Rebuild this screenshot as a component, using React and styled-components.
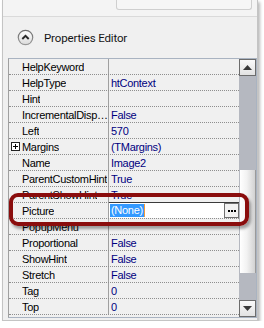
import React from "react";
import styled, { createGlobalStyle } from "styled-components";

const Global = createGlobalStyle`
  html, body { margin: 0; padding: 0; background: #ffffff; }
  body { font-family: "Liberation Sans", Arial, sans-serif; }
`;

const Panel = styled.div`
  position: relative;
  box-sizing: border-box;
  margin-left: 2px;
  width: 256px;
  height: 321px;
  background: #f0f0f0;
  border: 1px solid #c4c4c4;
  border-top: none;
  box-shadow: 2px 2px 3px rgba(0, 0, 0, 0.28);
  display: flex;
  flex-direction: column;
`;

const TopStrip = styled.div`
  height: 17px;
  box-sizing: border-box;
  background: #f4f4f4;
  border-bottom: 1px solid #dadada;
  display: flex;
  justify-content: flex-end;
  padding-right: 5px;
`;

const SearchStub = styled.div`
  width: 136px;
  height: 10px;
  box-sizing: border-box;
  border: 1px solid #cfcfcf;
  border-top: none;
  border-radius: 0 0 3px 3px;
  background: #f6f6f6;
`;

const Header = styled.div`
  height: 41px;
  display: flex;
  align-items: center;
  padding-left: 14px;
  gap: 10px;
  font-family: Roboto, "Noto Sans", sans-serif;
  font-size: 11.5px;
  letter-spacing: -0.15px;
  color: #141414;
`;

const Grid = styled.div`
  margin-left: 5px;
  box-sizing: border-box;
  height: 260px;
  border: 1px solid #a9b3c1;
  border-left-color: #a0a0a0;
  display: flex;
  font-family: "Liberation Sans", Arial, sans-serif;
  font-size: 11px;
  letter-spacing: -0.3px;
`;

const Rows = styled.div`
  flex: 1;
  display: flex;
  flex-direction: column;
  min-width: 0;
`;

const Row = styled.div`
  height: 16px;
  box-sizing: border-box;
  display: grid;
  grid-template-columns: 100px 1fr;
  border-bottom: 1px dotted #8e8e8e;
`;

const NameCell = styled.div`
  box-sizing: border-box;
  display: flex;
  align-items: center;
  padding-left: 2px;
  border-right: 1px solid #a0a0a0;
  color: #000;
  overflow: hidden;
  white-space: nowrap;
`;

const ExpSlot = styled.span`
  width: 11px;
  flex: none;
  display: flex;
  align-items: center;
`;

const PlusBox = styled.span`
  width: 9px;
  height: 9px;
  box-sizing: border-box;
  border: 1px solid #222;
  background: #fff;
  position: relative;
  &::before, &::after {
    content: "";
    position: absolute;
    background: #000;
  }
  &::before { left: 1px; right: 1px; top: 3px; height: 1px; }
  &::after { top: 1px; bottom: 1px; left: 3px; width: 1px; }
`;

const NameText = styled.span`
  overflow: hidden;
  text-overflow: ellipsis;
  white-space: nowrap;
  min-width: 0;
`;

const ValueCell = styled.div`
  display: flex;
  align-items: center;
  padding-left: 2px;
  color: #00007f;
  white-space: nowrap;
  overflow: hidden;
`;

const EditCell = styled.div`
  display: flex;
  align-items: stretch;
  background: #ffffff;
  border-top: 1px solid #3a3a3a;
  margin-top: -1px;
  padding-left: 1px;
`;

const Selected = styled.span`
  align-self: center;
  background: #3399ff;
  color: #fff;
  padding: 0 1px;
  line-height: 13px;
  border-right: 1px solid #f39a3c;
`;

const Spacer = styled.span`
  flex: 1;
`;

const EllipsisBtn = styled.span`
  width: 15px;
  box-sizing: border-box;
  border: 1px solid #6f6f6f;
  background: #f2f2f2;
  display: flex;
  align-items: center;
  justify-content: center;
  gap: 1px;
`;

const Dot = styled.span`
  width: 2px;
  height: 2px;
  background: #000;
`;

const Scrollbar = styled.div`
  width: 17px;
  flex: none;
  background: #b5b8c0;
  display: flex;
  flex-direction: column;
`;

const ScrollBtn = styled.div`
  height: 17px;
  box-sizing: border-box;
  border: 1px solid #6c6c6c;
  background: linear-gradient(#fafafa, #e2e2e2);
  display: flex;
  align-items: center;
  justify-content: center;
`;

const Track = styled.div`
  flex: 1;
  display: flex;
  flex-direction: column;
`;

const Thumb = styled.div`
  box-sizing: border-box;
  margin-left: 1px;
  border-right: 1px solid #9a9a9a;
  background: linear-gradient(90deg, #ffffff 0%, #f2f2f2 45%, #d2d2d2 100%);
`;

const Callout = styled.div`
  position: absolute;
  left: 6px;
  top: 193px;
  width: 240px;
  height: 33px;
  box-sizing: border-box;
  border: 4px solid #8a0d0d;
  border-radius: 9px;
  box-shadow: 2px 3px 3px rgba(0, 0, 0, 0.35);
  pointer-events: none;
`;

const CollapseIcon = () => (
  <svg width="17" height="17" viewBox="0 0 17 17">
    <defs>
      <linearGradient id="ring" x1="0" y1="0" x2="0" y2="1">
        <stop offset="0" stopColor="#6a6a6a" />
        <stop offset="1" stopColor="#9a9a9a" />
      </linearGradient>
      <linearGradient id="face" x1="0" y1="0" x2="0" y2="1">
        <stop offset="0" stopColor="#ffffff" />
        <stop offset="1" stopColor="#dcdcdc" />
      </linearGradient>
    </defs>
    <circle cx="8.5" cy="8.5" r="7.8" fill="url(#ring)" />
    <circle cx="8.5" cy="8.5" r="6.6" fill="url(#face)" />
    <path d="M5.3 10 L8.5 6.8 L11.7 10" fill="none" stroke="#2a2a2a" strokeWidth="1.9" />
  </svg>
);

const Tri = ({ up }) => (
  <svg width="9" height="5" viewBox="0 0 9 5">
    <path d={up ? "M0 5 L4.5 0 L9 5 Z" : "M0 0 L9 0 L4.5 5 Z"} fill="#3a3a3a" />
  </svg>
);

const props = [
  { name: "HelpKeyword", value: "" },
  { name: "HelpType", value: "htContext" },
  { name: "Hint", value: "" },
  { name: "IncrementalDisplay", value: "False" },
  { name: "Left", value: "570" },
  { name: "Margins", value: "(TMargins)", expandable: true },
  { name: "Name", value: "Image2" },
  { name: "ParentCustomHint", value: "True" },
  { name: "ParentShowHint", value: "True" },
  { name: "Picture", value: "(None)", editing: true },
  { name: "PopupMenu", value: "" },
  { name: "Proportional", value: "False" },
  { name: "ShowHint", value: "False" },
  { name: "Stretch", value: "False" },
  { name: "Tag", value: "0" },
  { name: "Top", value: "0" },
];

export default function App() {
  const thumbTop = 94;
  const thumbHeight = 103;
  return (
    <>
      <Global />
      <Panel>
        <TopStrip>
          <SearchStub />
        </TopStrip>
        <Header>
          <CollapseIcon />
          <span>Properties Editor</span>
        </Header>
        <Grid>
          <Rows>
            {props.map((p) => (
              <Row key={p.name}>
                <NameCell>
                  <ExpSlot>{p.expandable && <PlusBox />}</ExpSlot>
                  <NameText>{p.name}</NameText>
                </NameCell>
                {p.editing ? (
                  <EditCell>
                    <Selected>{p.value}</Selected>
                    <Spacer />
                    <EllipsisBtn>
                      <Dot />
                      <Dot />
                      <Dot />
                    </EllipsisBtn>
                  </EditCell>
                ) : (
                  <ValueCell>{p.value}</ValueCell>
                )}
              </Row>
            ))}
          </Rows>
          <Scrollbar>
            <ScrollBtn>
              <Tri up />
            </ScrollBtn>
            <Track>
              <Thumb style={{ marginTop: thumbTop, height: thumbHeight }} />
            </Track>
            <ScrollBtn>
              <Tri />
            </ScrollBtn>
          </Scrollbar>
        </Grid>
        <Callout />
      </Panel>
    </>
  );
}
